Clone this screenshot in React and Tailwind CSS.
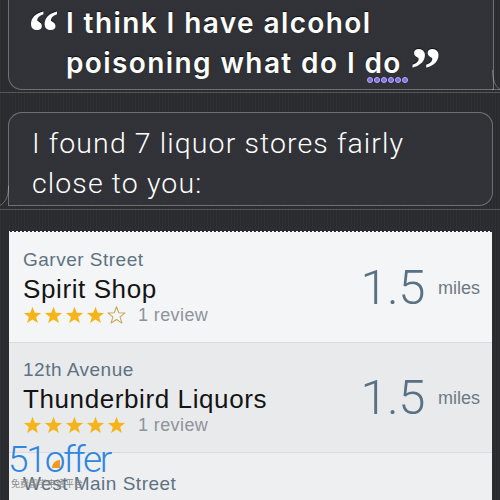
import React from 'react';

const Star = ({ filled }) => (
  <svg width="19" height="18" viewBox="0 0 24 23" className="shrink-0">
    <polygon
      points="12,1 14.9,8.6 23,8.9 16.6,13.9 18.9,21.8 12,17.2 5.1,21.8 7.4,13.9 1,8.9 9.1,8.6"
      fill={filled ? '#f4b41a' : 'none'}
      stroke={filled ? '#f4b41a' : '#c9a45a'}
      strokeWidth={filled ? 0 : 1.3}
      strokeLinejoin="round"
    />
  </svg>
);

function StoreRow({ street, name, stars, bg }) {
  return (
    <div className={`flex items-center justify-between pl-[14px] pr-[12px] h-[110px] border-b border-[#d9dbde] ${bg}`}>
      <div className="flex flex-col">
        <span className="text-[19px] leading-[22px] text-[#5e7282] tracking-[0.5px]">{street}</span>
        <span className="mt-[3px] text-[26px] leading-[30px] text-[#141414] tracking-[0.6px]">{name}</span>
        <div className="flex items-center h-[22px]">
          <div className="flex gap-[2px]">
            {[0, 1, 2, 3, 4].map((i) => (
              <Star key={i} filled={i < stars} />
            ))}
          </div>
          <span className="ml-[12px] text-[18px] leading-[22px] text-[#8d949a] tracking-[0.4px]">1 review</span>
        </div>
      </div>
      <div className="flex items-center">
        <span className="font-['Roboto'] font-light text-[49px] leading-[50px] text-[#587183] tracking-[-0.5px]">1.5</span>
        <span className="ml-[13px] mt-[2px] text-[18px] text-[#6d7a84]">miles</span>
      </div>
    </div>
  );
}

export default function App() {
  return (
    <div className="relative w-[500px] h-[500px] overflow-hidden bg-[#2a2b2f] bg-[repeating-linear-gradient(90deg,rgba(255,255,255,0.025)_0px,rgba(255,255,255,0.025)_1px,transparent_1px,transparent_3px)] font-['Liberation_Sans',Arial,sans-serif]">
      {/* user bubble */}
      <div className="relative ml-[8px] mr-[6px] mt-[-24px] rounded-[14px] rounded-br-none border border-white/30 bg-[#33353a]/80 pt-[26px] pb-[6px] pl-[19px]">
        <div className="flex text-white [text-shadow:0_-1px_1px_rgba(0,0,0,0.7)]">
          <span className="w-[38px] shrink-0 font-['Liberation_Serif',serif] font-bold text-[62px] leading-[56px]">“</span>
          <p className="mt-0 font-['Inter',sans-serif] font-semibold text-[28px] leading-[40px] tracking-[1.4px]">
            I think I have alcohol
            <br />
            poisoning what do I{' '}
            <span className="relative">
              do
              <span className="absolute left-[2px] -bottom-[3px] flex gap-[1px]">
                {[0, 1, 2, 3, 4, 5].map((i) => (
                  <span key={i} className="w-[6px] h-[6px] rounded-full bg-[#7b6fe0] border border-[#b7b0ff]" />
                ))}
              </span>
            </span>{' '}
            <span className="relative top-[16px] font-['Liberation_Serif',serif] text-[62px] leading-[0] font-bold tracking-normal">”</span>
          </p>
        </div>
        <svg className="absolute -right-[7px] -bottom-[1px]" width="8" height="20" viewBox="0 0 8 20">
          <path d="M0.5 0 C0.5 10 3 16 8 19.5" fill="none" stroke="rgba(255,255,255,0.3)" strokeWidth="1" />
        </svg>
        <div className="absolute -right-[7px] -bottom-[1px] w-[8px] h-px bg-white/30" />
      </div>

      <div className="mt-[2px] h-px bg-white/20" />

      {/* siri bubble */}
      <div className="relative ml-[8px] mr-[7px] mt-[19px] rounded-[14px] rounded-bl-none border border-white/30 bg-[#33353a]/80 pt-[11px] pb-[1px] pl-[23px]">
        <p className="font-['Roboto',sans-serif] font-light text-[28.5px] leading-[40px] text-white tracking-[1.1px]">
          I found 7 liquor stores fairly
          <br />
          close to you:
        </p>
        <svg className="absolute -left-[9px] -bottom-[1px]" width="9" height="20" viewBox="0 0 9 20">
          <path d="M8.5 0 C8.5 10 6 16 0 19.5" fill="none" stroke="rgba(255,255,255,0.3)" strokeWidth="1" />
        </svg>
      </div>

      <div className="mt-[3px] h-px bg-white/20" />

      {/* results card */}
      <div className="mt-[23px] ml-[9px] mr-[8px] bg-[#f4f5f6] relative">
        <div className="absolute -top-[3px] left-0 right-0 h-[4px] bg-[radial-gradient(circle_at_2px_0px,transparent_1.6px,#f4f5f6_2px)] bg-[length:4px_4px]" />
        <StoreRow street="Garver Street" name="Spirit Shop" stars={4} bg="bg-[#f4f5f6]" />
        <StoreRow street="12th Avenue" name="Thunderbird Liquors" stars={5} bg="bg-[#e9eaec]" />
        <div className="pl-[14px] pt-[20px] bg-[#eeeff1] h-[60px]">
          <span className="text-[19px] leading-[22px] text-[#5e7282] tracking-[0.5px]">West Main Street</span>
        </div>
      </div>

      {/* watermark */}
      <div className="absolute left-[8px] top-[439px] flex flex-col">
        <span className="relative font-['Roboto',sans-serif] font-light text-[37px] leading-[42px] tracking-[-2.2px] text-[#2f86e0]">
          51offer
          <span className="absolute left-[44px] top-[21px] w-[8px] h-[8px] rounded-tl-full bg-[#f39a1e]" />
        </span>
        <span className="ml-[3px] mt-[-2px] text-[9px] leading-[10px] text-[#8a8a8a] font-['Noto_Sans_CJK_SC',sans-serif]">免费留学申请平台</span>
      </div>
    </div>
  );
}
